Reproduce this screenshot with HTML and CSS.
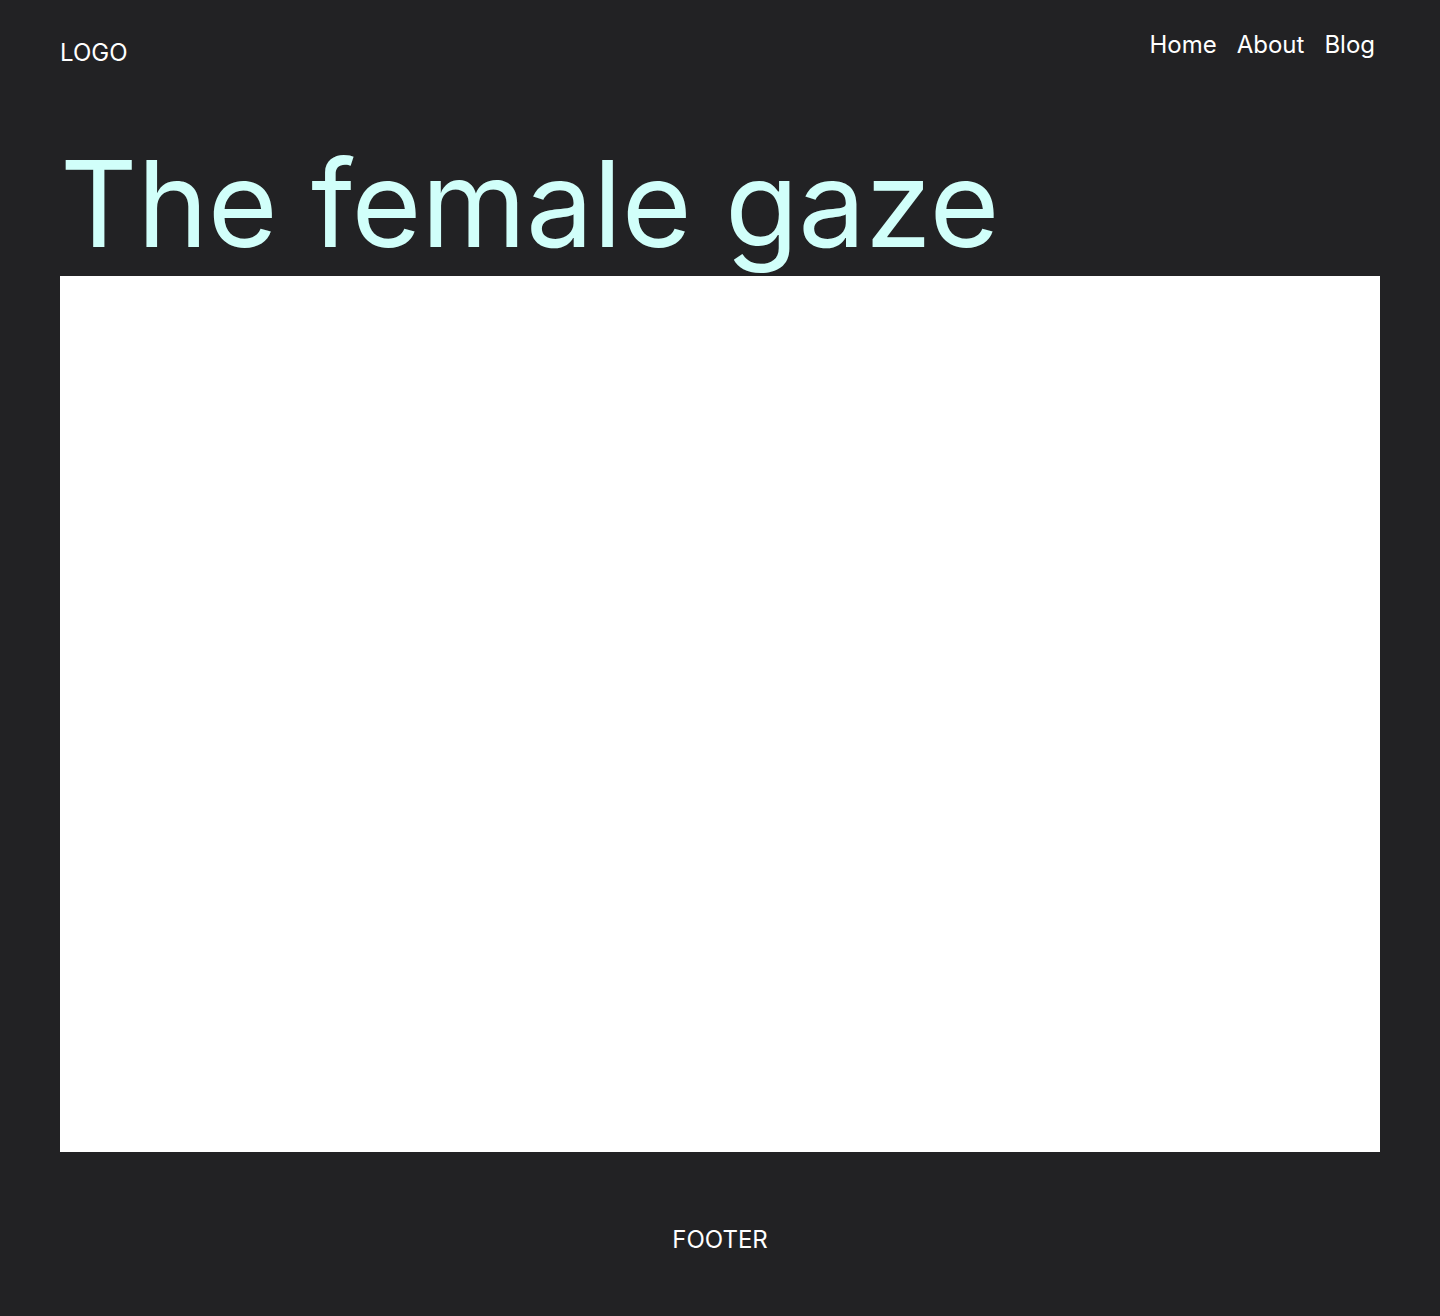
FILE: index.html
```html
<!DOCTYPE html>
<html lang="en">
<head>
<meta charset="utf-8">
<title>The female gaze</title>
<link rel="stylesheet" href="styles.css">
</head>
<body>
<div class="page">
  <header class="site-header">
    <div class="logo">LOGO</div>
    <nav class="nav">
      <a href="#">Home</a>
      <a href="#">About</a>
      <a href="#">Blog</a>
    </nav>
  </header>
  <main class="main">
    <h1 class="title">The female gaze</h1>
    <div class="hero"></div>
  </main>
  <footer class="site-footer">FOOTER</footer>
</div>
</body>
</html>
```

FILE: styles.css
```css
html, body {
  margin: 0;
  padding: 0;
  background: #222224;
}
body {
  font-family: Inter, "Noto Sans", sans-serif;
  color: #ffffff;
}
.page {
  min-height: 1316px;
  display: flex;
  flex-direction: column;
}
.site-header {
  display: flex;
  justify-content: space-between;
  align-items: flex-start;
  padding: 30px 65px 0 60px;
}
.logo {
  font-size: 24px;
  margin-top: 8px;
  line-height: 29px;
}
.nav {
  display: flex;
  gap: 20px;
}
.nav a {
  color: #ffffff;
  text-decoration: none;
  font-size: 24px;
  line-height: 29px;
}
.main {
  padding: 0 60px;
}
.title {
  margin: 64px 0 0 0;
  font-size: 120px;
  font-weight: 400;
  line-height: 145px;
  color: #d1fffa;
  letter-spacing: -0.3px;
}
.hero {
  background: #ffffff;
  height: 876px;
}
.site-footer {
  text-align: center;
  font-size: 24px;
  padding-top: 73px;
  line-height: 29px;
}
```
